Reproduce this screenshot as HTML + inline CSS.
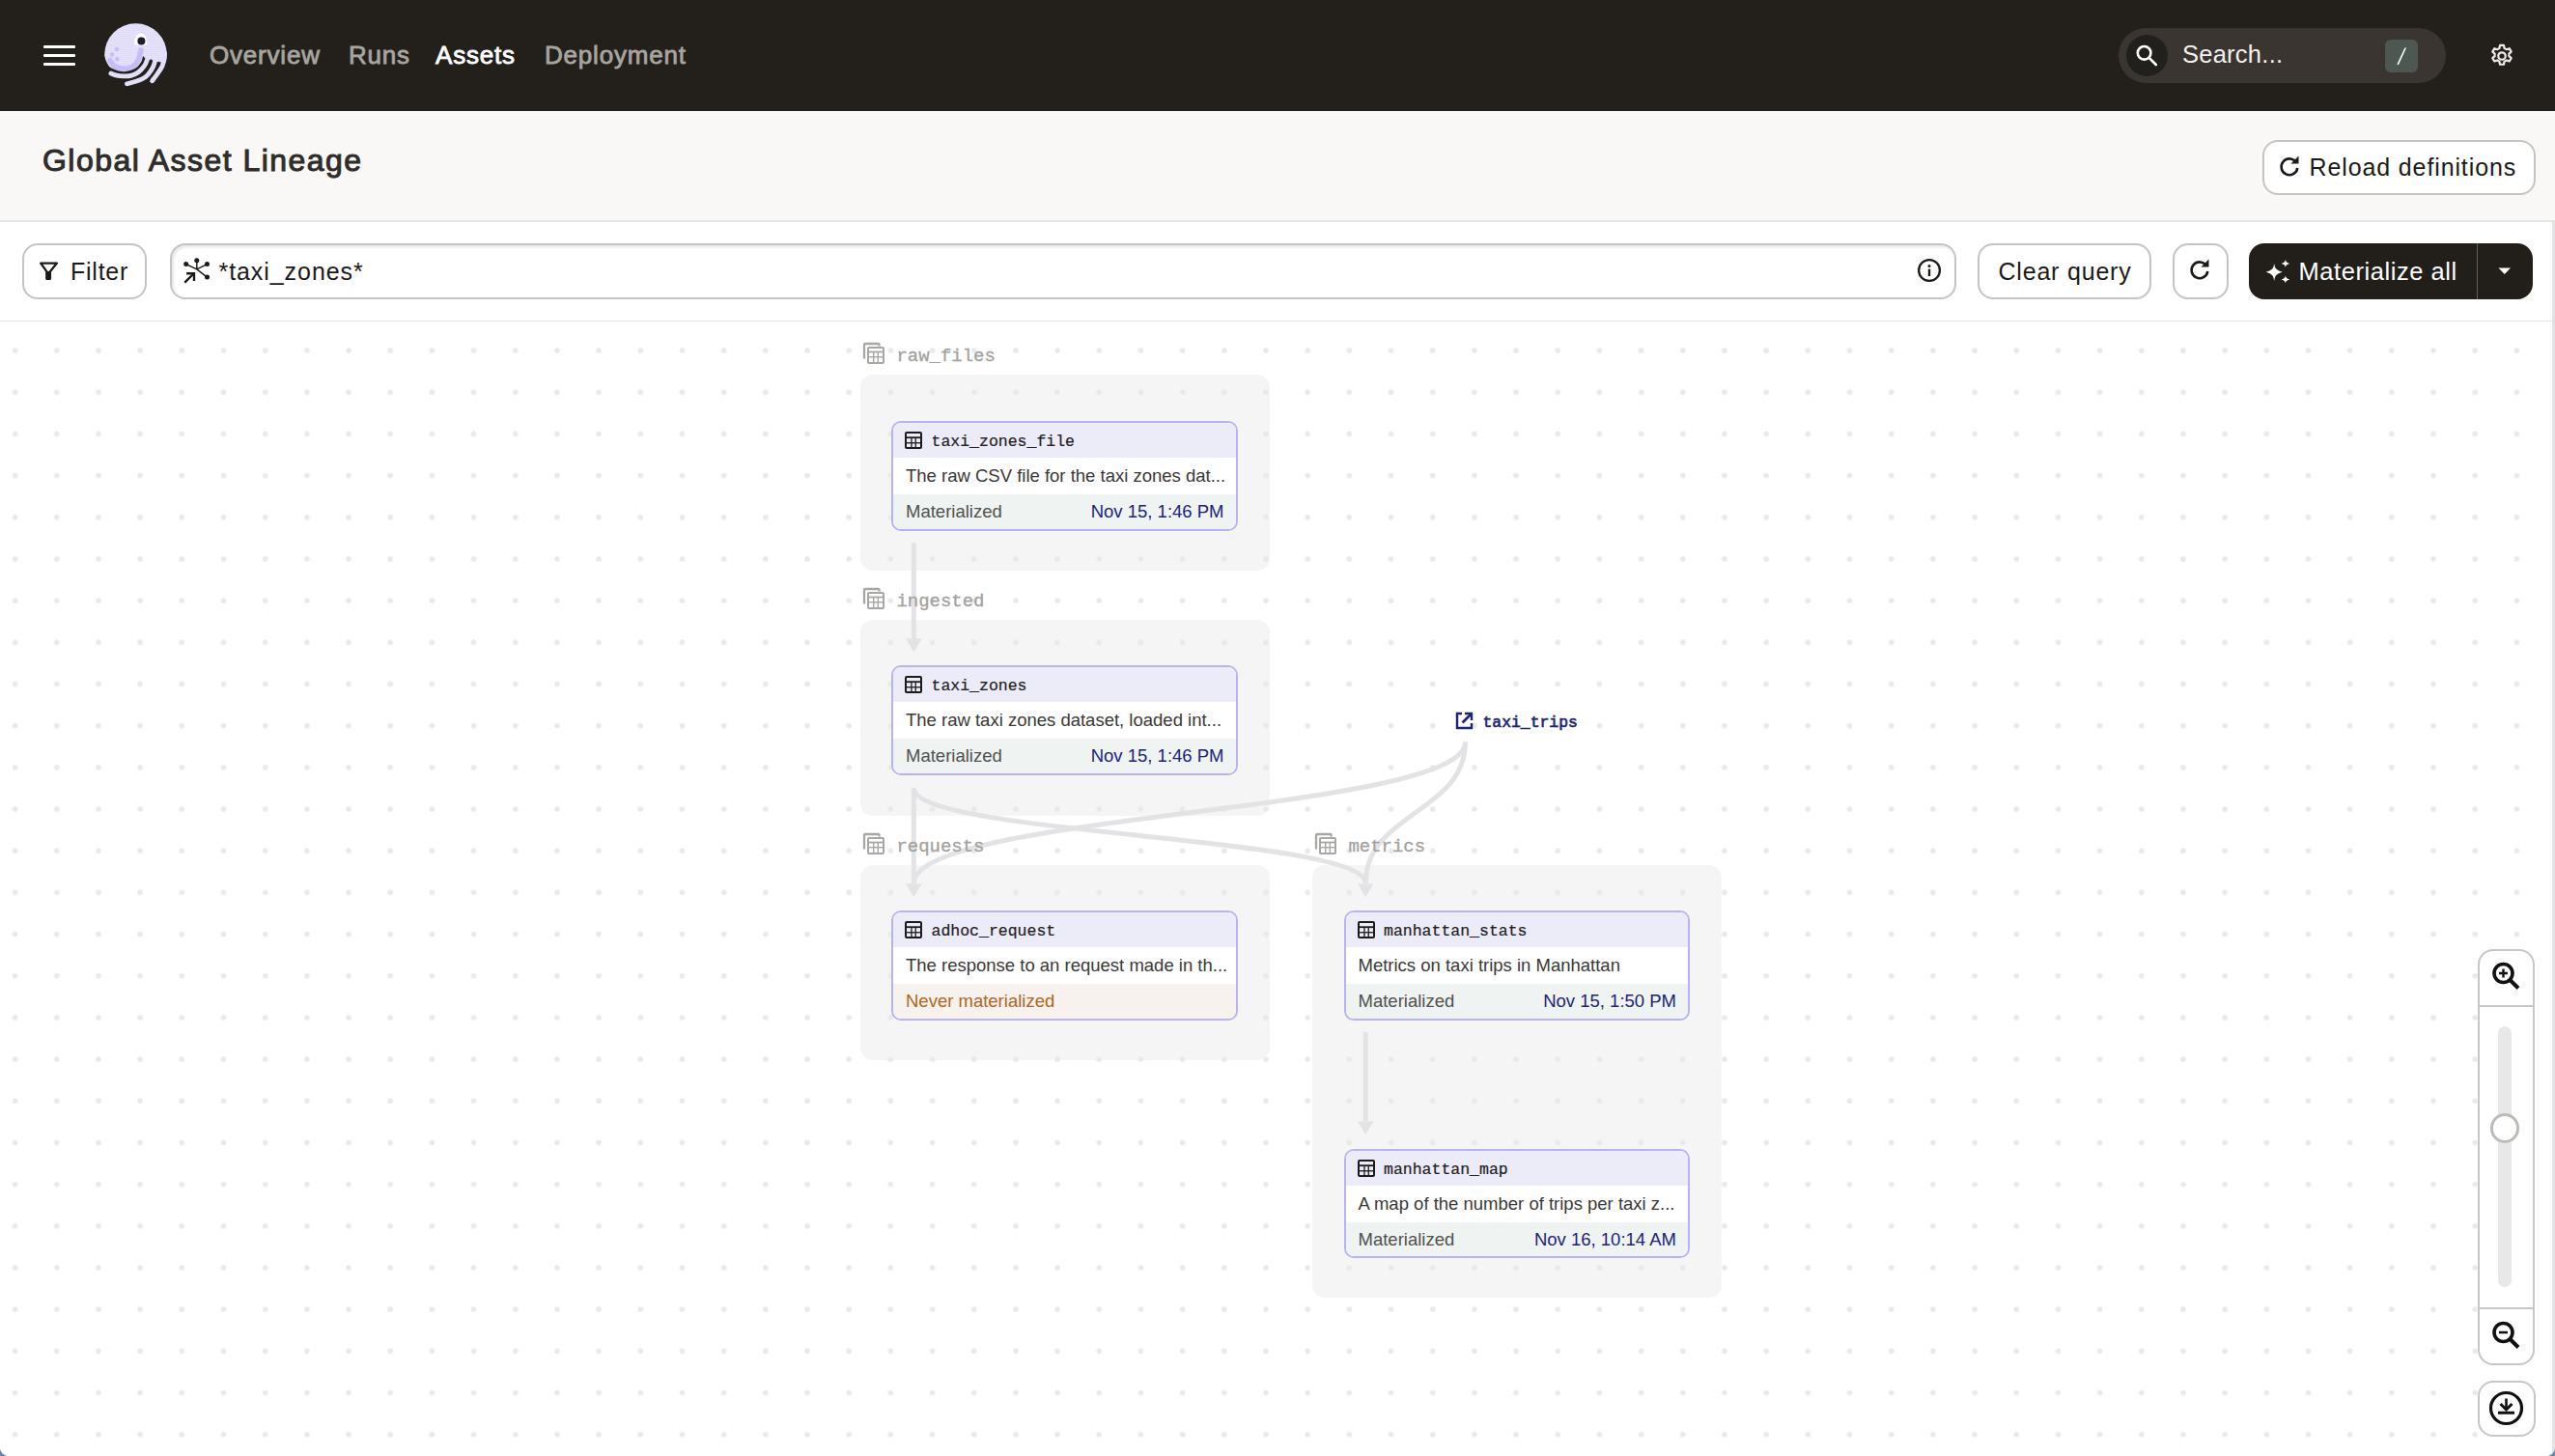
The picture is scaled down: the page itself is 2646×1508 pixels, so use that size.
<!DOCTYPE html>
<html><head><meta charset="utf-8">
<style>
*{box-sizing:border-box;margin:0;padding:0}
html,body{width:2646px;height:1508px;overflow:hidden;background:#6f83ae}
body{font-family:"Liberation Sans",sans-serif;position:relative}
.abs{position:absolute}
#win{position:absolute;left:0;top:0;width:2646px;height:1508px;background:#fff;overflow:hidden;border-radius:0 0 9px 9px}
#topbar{position:absolute;left:0;top:0;width:2646px;height:115px;background:#23201c}
.nav{position:absolute;top:39px;font-size:26px;line-height:36px;color:#a8a5a0;font-weight:normal;-webkit-text-stroke:0.8px currentColor;letter-spacing:0.8px;white-space:nowrap}
#header{position:absolute;left:0;top:115px;width:2646px;height:115px;background:#f9f8f6;border-bottom:2px solid #e5e4e6}
#toolbar{position:absolute;left:0;top:230px;width:2643px;height:103px;background:#fff;border-bottom:1.5px solid #e6e6e9}
.btn{position:absolute;background:#fff;border:2px solid #c6c4c1;border-radius:16px;color:#1c1a17;font-size:25px;white-space:nowrap}
.btntxt{position:absolute;line-height:30px}
#graph{position:absolute;left:0;top:333px;width:2643px;height:1175px;background:#fff}
#rstrip{position:absolute;left:2643px;top:230px;width:3px;height:1278px;background:#e3e3e6}
.group{position:absolute;background:#f5f5f5;border-radius:13px}
.glabel{position:absolute;font-family:"Liberation Mono",monospace;font-size:18.95px;color:#a3a19e;-webkit-text-stroke:0.3px #a3a19e;line-height:24px;white-space:nowrap}
.node{position:absolute;width:358.5px;height:113.5px;border:2px solid #b8b1f3;border-radius:10px;overflow:hidden;background:#fff}
.nh{position:absolute;left:0;top:0;width:100%;height:36px;background:#ecebf8}
.nd{position:absolute;left:0;top:36px;width:100%;height:38px;background:#fff}
.ns{position:absolute;left:0;top:74px;width:100%;height:40px;background:#eff3f1}
.nname{position:absolute;left:39.5px;top:10px;font-family:"Liberation Mono",monospace;font-size:16.5px;line-height:20px;color:#22201d;font-weight:normal;-webkit-text-stroke:0.2px #22201d;white-space:nowrap}
.ndesc{position:absolute;left:13px;top:0;font-size:18.5px;line-height:38px;color:#3a3936;white-space:nowrap}
.nst{position:absolute;left:13px;top:0;font-size:18.5px;line-height:36px;color:#4f514f;white-space:nowrap}
.ndate{position:absolute;right:12px;top:0;font-size:18.5px;line-height:36px;color:#1b2478;white-space:nowrap}
</style></head><body>
<div id="win">

<div id="topbar">
  <div class="abs" style="left:45px;top:47px;width:33px;height:3.3px;background:#fff;border-radius:1px"></div>
  <div class="abs" style="left:45px;top:56px;width:33px;height:3.3px;background:#fff;border-radius:1px"></div>
  <div class="abs" style="left:45px;top:65px;width:33px;height:3.3px;background:#fff;border-radius:1px"></div>
  <svg class="abs" style="left:100px;top:18px" width="80" height="80" viewBox="100 18 80 80">
  <defs>
   <pattern id="dp" width="2" height="2" patternUnits="userSpaceOnUse"><rect width="2" height="2" fill="#efeefa"/><circle cx="1" cy="1" r="0.58" fill="#b3a9f4"/></pattern>
   <mask id="hm" maskUnits="userSpaceOnUse" x="100" y="18" width="80" height="80"><rect x="100" y="18" width="80" height="80" fill="#fff"/>
     <path d="M100 59 L108.3 59 C108.75 60.08 109.90 63.63 111 65.5 C112.10 67.37 112.65 68.82 114.9 70.2 C117.15 71.58 121.53 73.23 124.5 73.8 C127.47 74.37 129.95 74.18 132.7 73.6 C135.45 73.02 138.73 71.90 141 70.3 C143.27 68.70 145.17 65.88 146.3 64 C147.43 62.12 147.55 59.83 147.8 59 Q148.5 57.2 149.3 59.5 L156 62 Q156.6 60.3 157.4 62.2 L164.3 64.3 Q164.8 62.8 165.6 64.6 L180 64.6 L180 98 L100 98 Z" fill="#000"/>
   </mask>
  </defs>
  <g mask="url(#hm)">
   <circle cx="140.5" cy="56.6" r="32.3" fill="url(#dp)"/>
   <path d="M114 62.5 C114.67 63.42 116.25 66.62 118 68 C119.75 69.38 122.05 70.37 124.5 70.8 C126.95 71.23 130.20 71.15 132.7 70.6 C135.20 70.05 137.70 69.02 139.5 67.5 C141.30 65.98 142.58 63.42 143.5 61.5 C144.42 59.58 144.58 57.58 145 56 C145.42 54.42 145.83 52.67 146 52" stroke="#c6bef7" stroke-width="5.5" fill="none" stroke-linecap="round"/>
   <g fill="#c6bef7"><circle cx="121" cy="51" r="2.2"/><circle cx="116" cy="56.5" r="2.2"/><circle cx="121.3" cy="61.3" r="2.2"/></g>
  </g>
  <g stroke="url(#dp)" stroke-linecap="round" fill="none">
   <path d="M114.9 76 C115.92 76.37 118.82 77.72 121 78.2 C123.18 78.68 125.58 78.87 128 78.9 C130.42 78.93 133.00 79.05 135.5 78.4 C138.00 77.75 140.72 76.62 143 75 C145.28 73.38 147.63 70.88 149.2 68.7 C150.77 66.52 151.72 64.18 152.4 61.9 C153.08 59.62 153.15 56.15 153.3 55" stroke-width="4.8"/>
   <path d="M131.5 86.8 C132.17 86.62 133.58 86.25 135.5 85.7 C137.42 85.15 140.75 84.32 143 83.5 C145.25 82.68 147.25 81.88 149 80.8 C150.75 79.72 151.87 79.02 153.5 77 C155.13 74.98 157.55 71.37 158.8 68.7 C160.05 66.03 160.58 63.28 161 61 C161.42 58.72 161.25 56.00 161.3 55" stroke-width="4.8"/>
   <path d="M157.6 83.8 C158.43 82.67 160.88 79.52 162.6 77 C164.32 74.48 166.67 71.37 167.9 68.7 C169.13 66.03 169.57 63.28 170 61 C170.43 58.72 170.42 56.00 170.5 55" stroke-width="4.8"/>
  </g>
  <path d="M139 46.8 Q138.8 35 145.7 34.6 Q152.6 34.6 152.5 46.8 Z" fill="#fff"/>
  <circle cx="146.4" cy="42.6" r="4" fill="#1e1b2e"/>
</svg>
  <div class="nav" style="left:217px">Overview</div>
  <div class="nav" style="left:361px">Runs</div>
  <div class="nav" style="left:451px;color:#fff">Assets</div>
  <div class="nav" style="left:564px">Deployment</div>
  <div class="abs" style="left:2194px;top:29px;width:338.5px;height:57px;border-radius:29px;background:#3a3531"></div>
  <div class="abs" style="left:2202px;top:35.7px;width:43px;height:43px;border-radius:50%;background:#22201c"></div>
  <svg class="abs" style="left:2202px;top:35.7px" width="43" height="43" viewBox="0 0 43 43">
    <circle cx="18.6" cy="18.8" r="6.8" fill="none" stroke="#fff" stroke-width="2.6"/>
    <path d="M23.6 23.8 L30.8 31" stroke="#fff" stroke-width="2.6" stroke-linecap="round"/>
  </svg>
  <div class="abs" style="left:2260px;top:38px;font-size:25.5px;line-height:36px;color:#f3f1ee;letter-spacing:0.25px">Search...</div>
  <div class="abs" style="left:2470px;top:41px;width:34px;height:34px;border-radius:6px;background:#4d5852"></div>
  <svg class="abs" style="left:2470px;top:41px" width="34" height="34" viewBox="0 0 34 34"><path d="M13.4 25.3 L21 9" stroke="#fff" stroke-width="1.6" stroke-linecap="round"/></svg>
  <svg class="abs" style="left:2577px;top:44px" width="28" height="28" viewBox="0 0 24 24">
    <path fill="none" stroke="#eeeceb" stroke-width="1.9" stroke-linejoin="round" d="M10.3 2.5h3.4l.5 2.6a7.5 7.5 0 0 1 1.9 1.1l2.5-.9 1.7 2.9-2 1.7a7.5 7.5 0 0 1 0 2.2l2 1.7-1.7 2.9-2.5-.9a7.5 7.5 0 0 1-1.9 1.1l-.5 2.6h-3.4l-.5-2.6a7.5 7.5 0 0 1-1.9-1.1l-2.5.9-1.7-2.9 2-1.7a7.5 7.5 0 0 1 0-2.2l-2-1.7 1.7-2.9 2.5.9a7.5 7.5 0 0 1 1.9-1.1z"/>
    <circle cx="12" cy="12" r="3.2" fill="none" stroke="#eeeceb" stroke-width="1.9"/>
  </svg>
</div>


<div id="header">
  <div class="abs" style="left:44px;top:31px;font-size:32px;line-height:40px;font-weight:normal;-webkit-text-stroke:1px #2f2c29;letter-spacing:1.45px;color:#2f2c29;white-space:nowrap">Global Asset Lineage</div>
  <div class="btn" style="left:2342.5px;top:29.5px;width:283px;height:57px;">
    <svg class="abs" style="left:12px;top:11px" width="28" height="28" viewBox="0 0 28 28">
      <path d="M21.2 10.5 A8.4 8.4 0 1 0 22.3 16" fill="none" stroke="#1c1a17" stroke-width="2.6"/>
      <path d="M15.5 11.5 L23.5 11.5 L23.5 3.5 Z" fill="#1c1a17"/>
    </svg>
    <div class="btntxt" style="left:47px;top:11px;letter-spacing:0.88px">Reload definitions</div>
  </div>
</div>


<div id="toolbar">
  <div class="btn" style="left:22.5px;top:22px;width:129.5px;height:57.5px;">
    <svg class="abs" style="left:14.5px;top:16px" width="22" height="22" viewBox="0 0 22 22">
      <path d="M3.2 2.6 H19.9 L12.9 11.2 V18.8 H9.3 V11.2 Z" fill="none" stroke="#1c1a17" stroke-width="2.3" stroke-linejoin="round"/>
      <path d="M9 11 H13.2 V19.6 H9 Z" fill="#1c1a17"/>
    </svg>
    <div class="btntxt" style="left:48.5px;top:12px;letter-spacing:0.76px">Filter</div>
  </div>
  <div class="btn" style="left:175.5px;top:22px;width:1850px;height:57.5px;box-shadow:inset 2px 2px 3px rgba(0,0,0,0.10)">
    <svg class="abs" style="left:0.5px;top:6px" width="40" height="40" viewBox="178 260 40 40">
      <g stroke="#1c1a17" stroke-width="1.4" fill="none">
        <path d="M203.8 278.9 L203.8 269.7 M203.8 278.9 L192.7 273.6 M203.8 278.9 L214.5 273.6 M203.8 278.9 L214.5 287.1"/>
      </g>
      <g fill="#1c1a17"><circle cx="203.8" cy="269.7" r="2.5"/><circle cx="192.7" cy="273.6" r="2.5"/><circle cx="214.5" cy="273.6" r="2.5"/><circle cx="214.5" cy="287.1" r="2.5"/></g>
      <path d="M191.3 292.7 L200.5 283.5" stroke="#1c1a17" stroke-width="2.4"/>
      <path d="M193.2 283.3 L201 283.3 L201 291" fill="none" stroke="#1c1a17" stroke-width="2.4"/>
    </svg>
    <div class="btntxt" style="left:49px;top:12px;letter-spacing:0.93px">*taxi_zones*</div>
    <svg class="abs" style="left:1807px;top:13.2px" width="26" height="26" viewBox="0 0 26 26">
      <circle cx="13" cy="13" r="10.9" fill="none" stroke="#1c1a17" stroke-width="2.3"/>
      <circle cx="13" cy="8.5" r="1.5" fill="#1c1a17"/>
      <rect x="11.8" y="11.6" width="2.4" height="7.4" fill="#1c1a17"/>
    </svg>
  </div>
  <div class="btn" style="left:2047.5px;top:22px;width:180px;height:57.5px;">
    <div class="btntxt" style="left:20px;top:12px;letter-spacing:0.8px">Clear query</div>
  </div>
  <div class="btn" style="left:2250px;top:22px;width:57.5px;height:57.5px;">
    <svg class="abs" style="left:12.2px;top:11.3px" width="28" height="28" viewBox="0 0 28 28">
      <path d="M21.2 10.5 A8.4 8.4 0 1 0 22.3 16" fill="none" stroke="#1c1a17" stroke-width="2.6"/>
      <path d="M15.5 11.5 L23.5 11.5 L23.5 3.5 Z" fill="#1c1a17"/>
    </svg>
  </div>
  <div class="abs" style="left:2328.5px;top:22px;width:294px;height:57.5px;background:#221f1b;border-radius:16px;color:#fff;font-size:25.5px">
    <svg class="abs" style="left:14px;top:12.5px" width="32" height="32" viewBox="0 0 32 32">
      <path fill="#fff" d="M12.2 8 C13 13 14 14.5 20.8 16.8 C14 19 13 20.5 12.2 26 C11.4 20.5 10.4 19 3.6 16.8 C10.4 14.5 11.4 13 12.2 8 Z"/>
      <path fill="#fff" d="M23.9 3.8 C24.3 6.2 24.8 6.9 28.1 8 C24.8 9.1 24.3 9.8 23.9 12.2 C23.5 9.8 23 9.1 19.7 8 C23 6.9 23.5 6.2 23.9 3.8 Z"/>
      <path fill="#fff" d="M23.9 20.3 C24.3 22.7 24.8 23.4 28.1 24.5 C24.8 25.6 24.3 26.3 23.9 28.7 C23.5 26.3 23 25.6 19.7 24.5 C23 23.4 23.5 22.7 23.9 20.3 Z"/>
    </svg>
    <div class="btntxt" style="left:52px;top:14px;letter-spacing:0.56px">Materialize all</div>
    <div class="abs" style="left:236px;top:0;width:1.2px;height:57.5px;background:#5b605b"></div>
    <svg class="abs" style="left:257px;top:22px" width="16" height="12" viewBox="0 0 16 12"><path d="M1.5 3.5 H14 L7.75 10 Z" fill="#fff"/></svg>
  </div>
</div>

<div id="graph"><div class="group" style="left:890.5px;top:55px;width:424.5px;height:203px"></div><div class="group" style="left:890.5px;top:309px;width:424.5px;height:203px"></div><div class="group" style="left:890.5px;top:563px;width:424.5px;height:202px"></div><div class="group" style="left:1358.5px;top:563px;width:424px;height:448px"></div><svg width="2643" height="1175" style="position:absolute;left:0;top:0"><defs><pattern id="dots" patternUnits="userSpaceOnUse" width="43.18" height="43.18" x="-6.0" y="8.4"><circle cx="21.59" cy="21.59" r="2.8" fill="#e9e9e9"/></pattern></defs><rect width="2643" height="1175" fill="url(#dots)"/></svg></div>
<svg class="abs" style="left:0;top:0" width="2646" height="1508">
<g fill="none" stroke="#e3e3e6" stroke-width="5">
<path d="M946.3 562 V662"/>
<path d="M946.3 816 V915"/>
<path d="M946.3 816 C946.3 865.5 1414.2 865.5 1414.2 915"/>
<path d="M1517.5 768.5 C1517.5 841.75 946.3 841.75 946.3 915"/>
<path d="M1517.5 768.5 C1517.5 841.75 1414.2 841.75 1414.2 915"/>
<path d="M1414.2 1069 V1161"/>
</g>
<g fill="#e3e3e6">
<path d="M938 661.3 L954.6 661.3 L946.3 675.6 Z"/>
<path d="M938 915.2 L954.6 915.2 L946.3 929.3 Z"/>
<path d="M1405.9 915.2 L1422.5 915.2 L1414.2 929.3 Z"/>
<path d="M1405.9 1161.2 L1422.5 1161.2 L1414.2 1175.2 Z"/>
</g>
</svg>
<svg class="abs" style="left:893.0px;top:354px" width="24" height="24" viewBox="0 0 24 24"><path d="M2 17.5 V3.2 a1.2 1.2 0 0 1 1.2 -1.2 H16.4 a1.2 1.2 0 0 1 1.2 1.2 V4.5" fill="none" stroke="#a9a7a4" stroke-width="2.3"/><rect x="6" y="6" width="16" height="16" rx="1" fill="none" stroke="#a9a7a4" stroke-width="2"/><rect x="6" y="9.6" width="16" height="1.8" fill="#a9a7a4"/><rect x="6" y="15" width="16" height="1.4" fill="#a9a7a4"/><rect x="11" y="10" width="1.4" height="12" fill="#a9a7a4"/><rect x="15.6" y="10" width="1.4" height="12" fill="#a9a7a4"/></svg>
<div class="glabel" style="left:928.5px;top:356.5px">raw_files</div>
<svg class="abs" style="left:893.0px;top:608px" width="24" height="24" viewBox="0 0 24 24"><path d="M2 17.5 V3.2 a1.2 1.2 0 0 1 1.2 -1.2 H16.4 a1.2 1.2 0 0 1 1.2 1.2 V4.5" fill="none" stroke="#a9a7a4" stroke-width="2.3"/><rect x="6" y="6" width="16" height="16" rx="1" fill="none" stroke="#a9a7a4" stroke-width="2"/><rect x="6" y="9.6" width="16" height="1.8" fill="#a9a7a4"/><rect x="6" y="15" width="16" height="1.4" fill="#a9a7a4"/><rect x="11" y="10" width="1.4" height="12" fill="#a9a7a4"/><rect x="15.6" y="10" width="1.4" height="12" fill="#a9a7a4"/></svg>
<div class="glabel" style="left:928.5px;top:610.5px">ingested</div>
<svg class="abs" style="left:893.0px;top:862px" width="24" height="24" viewBox="0 0 24 24"><path d="M2 17.5 V3.2 a1.2 1.2 0 0 1 1.2 -1.2 H16.4 a1.2 1.2 0 0 1 1.2 1.2 V4.5" fill="none" stroke="#a9a7a4" stroke-width="2.3"/><rect x="6" y="6" width="16" height="16" rx="1" fill="none" stroke="#a9a7a4" stroke-width="2"/><rect x="6" y="9.6" width="16" height="1.8" fill="#a9a7a4"/><rect x="6" y="15" width="16" height="1.4" fill="#a9a7a4"/><rect x="11" y="10" width="1.4" height="12" fill="#a9a7a4"/><rect x="15.6" y="10" width="1.4" height="12" fill="#a9a7a4"/></svg>
<div class="glabel" style="left:928.5px;top:864.5px">requests</div>
<svg class="abs" style="left:1361.0px;top:862px" width="24" height="24" viewBox="0 0 24 24"><path d="M2 17.5 V3.2 a1.2 1.2 0 0 1 1.2 -1.2 H16.4 a1.2 1.2 0 0 1 1.2 1.2 V4.5" fill="none" stroke="#a9a7a4" stroke-width="2.3"/><rect x="6" y="6" width="16" height="16" rx="1" fill="none" stroke="#a9a7a4" stroke-width="2"/><rect x="6" y="9.6" width="16" height="1.8" fill="#a9a7a4"/><rect x="6" y="15" width="16" height="1.4" fill="#a9a7a4"/><rect x="11" y="10" width="1.4" height="12" fill="#a9a7a4"/><rect x="15.6" y="10" width="1.4" height="12" fill="#a9a7a4"/></svg>
<div class="glabel" style="left:1396.5px;top:864.5px">metrics</div>
<div class="node" style="left:923px;top:436px">
<div class="nh"><svg class="abs" style="left:12px;top:9px" width="18" height="18" viewBox="0 0 18 18"><rect x="1" y="1" width="16" height="16" rx="1" fill="none" stroke="#1d1b19" stroke-width="2"/><rect x="1" y="5.3" width="16" height="1.8" fill="#1d1b19"/><rect x="1" y="11.1" width="16" height="1.3" fill="#1d1b19"/><rect x="6.3" y="6" width="1.3" height="11" fill="#1d1b19"/><rect x="10.6" y="6" width="1.3" height="11" fill="#1d1b19"/></svg><div class="nname">taxi_zones_file</div></div>
<div class="nd"><div class="ndesc">The raw CSV file for the taxi zones dat...</div></div>
<div class="ns"><div class="nst">Materialized</div><div class="ndate">Nov 15, 1:46 PM</div></div>
</div>
<div class="node" style="left:923px;top:689px">
<div class="nh"><svg class="abs" style="left:12px;top:9px" width="18" height="18" viewBox="0 0 18 18"><rect x="1" y="1" width="16" height="16" rx="1" fill="none" stroke="#1d1b19" stroke-width="2"/><rect x="1" y="5.3" width="16" height="1.8" fill="#1d1b19"/><rect x="1" y="11.1" width="16" height="1.3" fill="#1d1b19"/><rect x="6.3" y="6" width="1.3" height="11" fill="#1d1b19"/><rect x="10.6" y="6" width="1.3" height="11" fill="#1d1b19"/></svg><div class="nname">taxi_zones</div></div>
<div class="nd"><div class="ndesc">The raw taxi zones dataset, loaded int...</div></div>
<div class="ns"><div class="nst">Materialized</div><div class="ndate">Nov 15, 1:46 PM</div></div>
</div>
<div class="node" style="left:923px;top:943px">
<div class="nh"><svg class="abs" style="left:12px;top:9px" width="18" height="18" viewBox="0 0 18 18"><rect x="1" y="1" width="16" height="16" rx="1" fill="none" stroke="#1d1b19" stroke-width="2"/><rect x="1" y="5.3" width="16" height="1.8" fill="#1d1b19"/><rect x="1" y="11.1" width="16" height="1.3" fill="#1d1b19"/><rect x="6.3" y="6" width="1.3" height="11" fill="#1d1b19"/><rect x="10.6" y="6" width="1.3" height="11" fill="#1d1b19"/></svg><div class="nname">adhoc_request</div></div>
<div class="nd"><div class="ndesc">The response to an request made in th...</div></div>
<div class="ns" style="background:#f7f2ed"><div class="nst" style="color:#b0661f">Never materialized</div></div>
</div>
<div class="node" style="left:1391.5px;top:943px">
<div class="nh"><svg class="abs" style="left:12px;top:9px" width="18" height="18" viewBox="0 0 18 18"><rect x="1" y="1" width="16" height="16" rx="1" fill="none" stroke="#1d1b19" stroke-width="2"/><rect x="1" y="5.3" width="16" height="1.8" fill="#1d1b19"/><rect x="1" y="11.1" width="16" height="1.3" fill="#1d1b19"/><rect x="6.3" y="6" width="1.3" height="11" fill="#1d1b19"/><rect x="10.6" y="6" width="1.3" height="11" fill="#1d1b19"/></svg><div class="nname">manhattan_stats</div></div>
<div class="nd"><div class="ndesc">Metrics on taxi trips in Manhattan</div></div>
<div class="ns"><div class="nst">Materialized</div><div class="ndate">Nov 15, 1:50 PM</div></div>
</div>
<div class="node" style="left:1391.5px;top:1189.5px">
<div class="nh"><svg class="abs" style="left:12px;top:9px" width="18" height="18" viewBox="0 0 18 18"><rect x="1" y="1" width="16" height="16" rx="1" fill="none" stroke="#1d1b19" stroke-width="2"/><rect x="1" y="5.3" width="16" height="1.8" fill="#1d1b19"/><rect x="1" y="11.1" width="16" height="1.3" fill="#1d1b19"/><rect x="6.3" y="6" width="1.3" height="11" fill="#1d1b19"/><rect x="10.6" y="6" width="1.3" height="11" fill="#1d1b19"/></svg><div class="nname">manhattan_map</div></div>
<div class="nd"><div class="ndesc">A map of the number of trips per taxi z...</div></div>
<div class="ns"><div class="nst">Materialized</div><div class="ndate">Nov 16, 10:14 AM</div></div>
</div>
<svg class="abs" style="left:1507px;top:737px" width="19" height="19" viewBox="0 0 19 19"><path d="M7 2 H2 V17 H17 V12" fill="none" stroke="#1b2478" stroke-width="2.4"/><path d="M10 2 H17 V9" fill="none" stroke="#1b2478" stroke-width="2.4"/><path d="M17 2 L7.5 11.5" stroke="#1b2478" stroke-width="2.6"/></svg>
<div class="abs" style="left:1535.5px;top:737px;font-family:'Liberation Mono',monospace;font-size:16.4px;line-height:24px;color:#1b2478;font-weight:normal;-webkit-text-stroke:0.6px #1b2478">taxi_trips</div>

<div class="abs" style="left:2566px;top:982.5px;width:59px;height:431px;border:2px solid #c9c7c4;border-radius:16px;background:#fff"></div>
<div class="abs" style="left:2566px;top:1041px;width:59px;height:315px;border-top:2px solid #c9c7c4;border-bottom:2px solid #c9c7c4;"></div>
<svg class="abs" style="left:2576px;top:992px" width="40" height="40" viewBox="0 0 40 40">
  <circle cx="16.5" cy="16" r="9.5" fill="none" stroke="#111" stroke-width="3.6"/>
  <path d="M23.5 23 L32 31.5" stroke="#111" stroke-width="4" stroke-linecap="butt"/>
  <path d="M12 16 H21 M16.5 11.5 V20.5" stroke="#111" stroke-width="2.4"/>
</svg>
<div class="abs" style="left:2587px;top:1063px;width:14px;height:270px;border-radius:7px;background:#e8e8e8"></div>
<div class="abs" style="left:2578.5px;top:1153px;width:30.5px;height:30.5px;border-radius:50%;background:#fff;border:3px solid #bdbbb8"></div>
<svg class="abs" style="left:2576px;top:1364px" width="40" height="40" viewBox="0 0 40 40">
  <circle cx="16.5" cy="16" r="9.5" fill="none" stroke="#111" stroke-width="3.6"/>
  <path d="M23.5 23 L32 31.5" stroke="#111" stroke-width="4" stroke-linecap="butt"/>
  <path d="M12 16 H21" stroke="#111" stroke-width="2.4"/>
</svg>
<div class="abs" style="left:2566px;top:1429.5px;width:59.5px;height:58.5px;border:2px solid #c9c7c4;border-radius:16px;background:#fff"></div>
<svg class="abs" style="left:2576px;top:1439px" width="40" height="40" viewBox="0 0 40 40">
  <circle cx="19.5" cy="19.5" r="16" fill="none" stroke="#111" stroke-width="3.2"/>
  <path d="M19.5 9.5 V19" stroke="#111" stroke-width="2.6"/>
  <path d="M13.5 15 L19.5 21 L25.5 15" fill="none" stroke="#111" stroke-width="3"/>
  <path d="M11 24.2 H28" stroke="#111" stroke-width="3"/>
</svg>

<div id="rstrip"></div>
</div>
</body></html>
